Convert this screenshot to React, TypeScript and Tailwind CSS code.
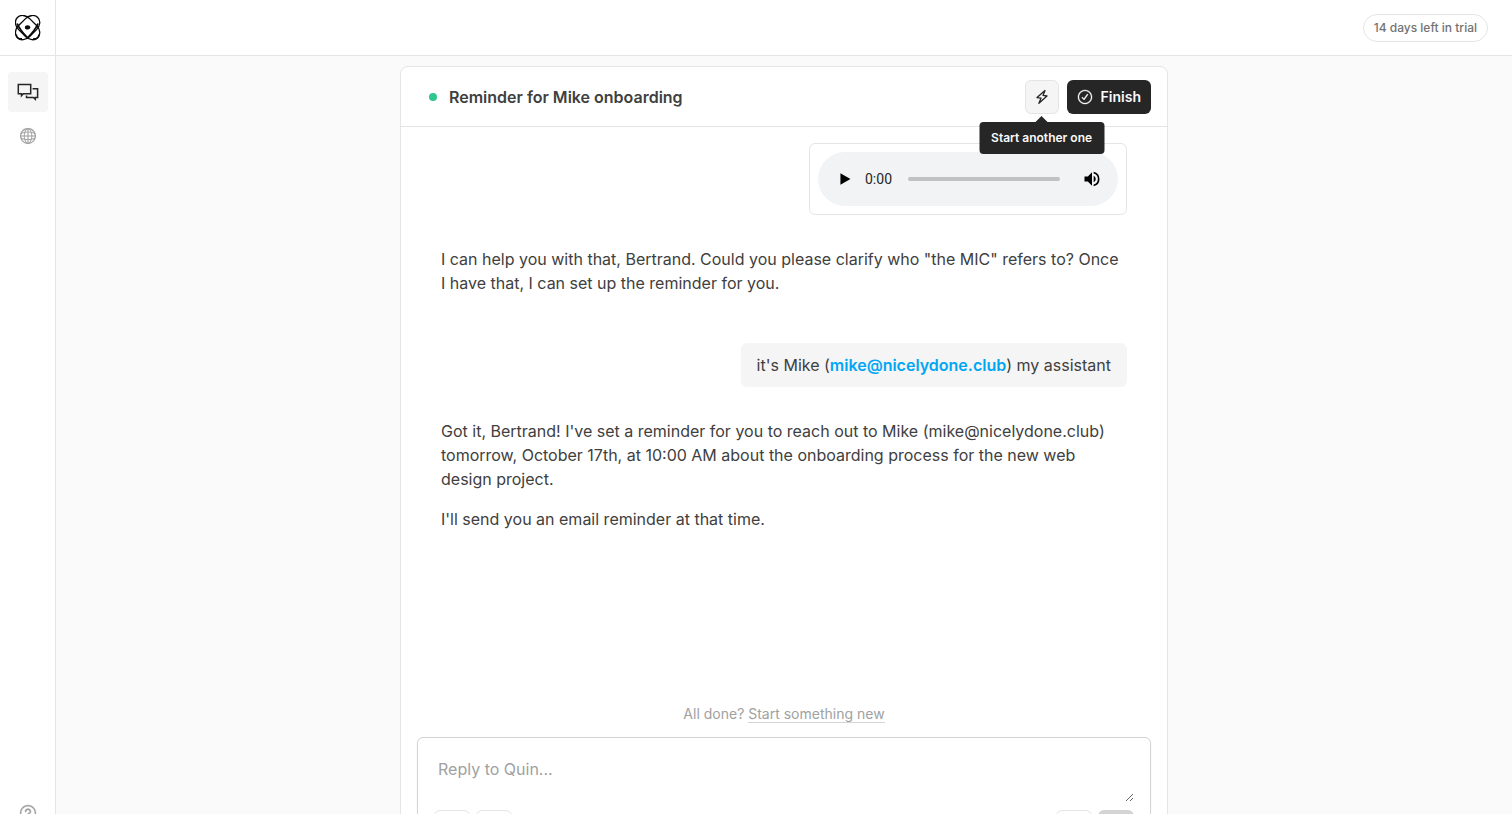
import React from "react";
import { RxCheckCircled, RxGlobe, RxQuestionMarkCircled, RxPaperPlane, RxImage, RxPlus } from "react-icons/rx";
import { VscMic } from "react-icons/vsc";

function Logo() {
  return (
    <svg viewBox="0 0 26 26" className="size-[26px]" fill="none" stroke="#0a0a0a" aria-hidden="true">
      <rect x="-7.8" y="-14.4" width="15.6" height="28.8" rx="7.8" ry="9.5" strokeWidth="1.3" transform="translate(12.6 12.6) rotate(45)" />
      <rect x="-7.8" y="-14.4" width="15.6" height="28.8" rx="7.8" ry="9.5" strokeWidth="1.3" transform="translate(12.6 12.6) rotate(-45)" />
      <path d="M2.2 8.5Q4.6 14.8 12.6 22.8Q20.6 14.8 23 8.5" strokeWidth="1.8" />
      <path d="M1.4 19.5Q1.4 24 7 23.8M23.8 19.5Q23.8 24 18.2 23.8" strokeWidth="1.4" />
      <ellipse cx="12.6" cy="12.4" rx="2.7" ry="2.1" fill="#0a0a0a" stroke="none" />
    </svg>
  );
}

function ChatsIcon() {
  return (
    <svg viewBox="0 0 22 22" className="size-[22px]" fill="none" stroke="currentColor" strokeWidth="1.5" aria-hidden="true">
      <path d="M1.3 3.5h12.4v9.3H6.4l-1.9 1.9v-1.9H1.3z" />
      <path d="M15.6 7.7h5v8.7h-2.3v1.9l-1.9-1.9H9.5v-1.8" />
    </svg>
  );
}

function BoltIcon() {
  return (
    <svg viewBox="0 0 16 16" className="size-4" fill="none" stroke="currentColor" strokeWidth="1.3" strokeLinejoin="round" aria-hidden="true">
      <path d="M11 1.5L3 8.6l4 .6-2.1 5.1L13 7l-4-.6z" />
    </svg>
  );
}

function Sidebar() {
  return (
    <nav aria-label="Main" className="flex w-14 shrink-0 flex-col items-center border-r border-neutral-200 bg-white">
      <a href="#home" aria-label="Home" className="flex h-14 w-full items-center justify-center border-b border-neutral-200">
        <Logo />
      </a>
      <div className="flex flex-col items-center gap-1 pt-4">
        <a href="#chats" aria-label="Conversations" className="flex size-10 items-center justify-center rounded bg-neutral-100 text-neutral-800">
          <ChatsIcon />
        </a>
        <a href="#web" aria-label="Browse" className="flex size-10 items-center justify-center rounded text-neutral-400">
          <RxGlobe className="size-[18px] stroke-current stroke-[0.1]" />
        </a>
      </div>
      <a href="#help" aria-label="Help" className="mt-auto mb-[55px] flex size-10 items-center justify-center text-neutral-400">
        <RxQuestionMarkCircled className="size-[18px] stroke-current stroke-[0.3]" />
      </a>
    </nav>
  );
}

function AudioPlayer() {
  return (
    <div className="self-end rounded-md border border-neutral-200 p-2">
      <div className="flex h-[54px] w-[300px] items-center rounded-full bg-[#f1f3f4] pr-3.5 pl-[15px]">
        <button type="button" aria-label="Play" className="flex size-6 items-center justify-center">
          <svg viewBox="0 0 24 24" className="size-5" aria-hidden="true">
            <path d="M6.5 5v14l12-7z" />
          </svg>
        </button>
        <span className="ml-2 font-[Roboto,sans-serif] text-sm text-neutral-800">0:00</span>
        <input
          type="range"
          aria-label="Seek"
          defaultValue={0}
          className="ml-4 h-1 min-w-0 flex-1 appearance-none rounded-full bg-[#c1c1c1] [&::-webkit-slider-thumb]:size-0 [&::-webkit-slider-thumb]:appearance-none"
        />
        <button type="button" aria-label="Mute" className="ml-5 flex size-6 items-center justify-center">
          <svg viewBox="0 0 24 24" className="size-5" aria-hidden="true">
            <path d="M3 9v6h4l5 5V4L7 9H3zm13.5 3A4.5 4.5 0 0 0 14 7.97v8.05A4.5 4.5 0 0 0 16.5 12zM14 3.23v2.06a7 7 0 0 1 0 13.42v2.06a9 9 0 0 0 0-17.54z" />
          </svg>
        </button>
      </div>
    </div>
  );
}

function CardHeader() {
  return (
    <header className="flex h-[60px] shrink-0 items-center border-b border-neutral-200 pr-4 pl-7">
      <span className="mr-3 size-2 rounded-full bg-[#2fc78e]" />
      <h1 className="font-semibold text-neutral-700">Reminder for Mike onboarding</h1>
      <div className="ml-auto flex gap-2">
        <div className="relative">
          <button type="button" aria-label="Start another one" className="flex size-[34px] items-center justify-center rounded-md border border-neutral-200 bg-neutral-100 text-neutral-800">
            <BoltIcon />
          </button>
          <div role="tooltip" className="absolute top-full left-1/2 z-10 mt-2 -translate-x-1/2 rounded bg-neutral-800 px-3 py-2 text-xs leading-4 font-semibold whitespace-nowrap text-neutral-50">
            <span className="absolute bottom-full left-1/2 -translate-x-1/2 border-x-6 border-b-6 border-x-transparent border-b-neutral-800" />
            Start another one
          </div>
        </div>
        <button type="button" className="flex h-[34px] items-center gap-2 rounded-md bg-neutral-800 px-2.5 text-sm font-semibold text-neutral-50">
          <RxCheckCircled className="size-4 stroke-current stroke-[0.3]" />
          Finish
        </button>
      </div>
    </header>
  );
}

function Composer() {
  const tool = "flex h-[34px] w-9 items-center justify-center rounded-md border border-neutral-200 text-neutral-500";
  return (
    <form className="mx-4 mb-4 shrink-0 rounded-md border border-neutral-300 p-4 shadow-xs">
      <textarea
        aria-label="Reply to Quin"
        placeholder="Reply to Quin..."
        className="block h-12 w-full resize-y px-1 pt-[3px] text-neutral-700 outline-none placeholder:text-neutral-400"
      />
      <div className="mt-2 flex gap-1.5">
        <button type="button" aria-label="Add" className={tool}><RxPlus /></button>
        <button type="button" aria-label="Add image" className={tool}><RxImage /></button>
        <button type="button" aria-label="Record" className={`${tool} ml-auto`}><VscMic /></button>
        <button type="submit" aria-label="Send" className="flex h-[34px] w-9 items-center justify-center rounded-md bg-neutral-300 text-white"><RxPaperPlane /></button>
      </div>
    </form>
  );
}

export default function App() {
  return (
    <div className="h-screen overflow-y-auto bg-neutral-50 font-[Inter,sans-serif] text-base text-neutral-700 [scrollbar-width:none]">
      <div className="flex min-h-[calc(100vh+74px)]">
        <Sidebar />
        <div className="flex min-w-0 flex-1 flex-col">
          <header className="flex h-14 shrink-0 items-center justify-end border-b border-neutral-200 bg-white px-6">
            <span className="rounded-full border border-neutral-200 px-2.5 py-1 text-xs leading-[18px] font-medium text-neutral-500">14 days left in trial</span>
          </header>
          <main className="mx-auto mt-2.5 mb-2.5 flex w-full max-w-3xl flex-1 flex-col rounded-lg border border-neutral-200 bg-white">
            <CardHeader />
            <div className="flex flex-1 flex-col px-10 pt-4 pb-8">
              <AudioPlayer />
              <p className="mt-8">
                I can help you with that, Bertrand. Could you please clarify who "the MIC" refers to? Once I have that, I can set up the reminder for you.
              </p>
              <p className="mt-12 self-end rounded-md bg-neutral-100 px-4 py-2.5">
                it's Mike (<a href="mailto:mike@nicelydone.club" className="font-semibold text-sky-500">mike@nicelydone.club</a>) my assistant
              </p>
              <div className="mt-8 flex flex-col gap-4">
                <p>
                  Got it, Bertrand! I've set a reminder for you to reach out to Mike (mike@nicelydone.club) tomorrow, October 17th, at 10:00 AM about the onboarding process for the new web design project.
                </p>
                <p>I'll send you an email reminder at that time.</p>
              </div>
            </div>
            <p className="pb-[13px] text-center text-sm text-neutral-400">
              All done? <a href="#new" className="border-b border-neutral-300">Start something new</a>
            </p>
            <Composer />
          </main>
        </div>
      </div>
    </div>
  );
}
